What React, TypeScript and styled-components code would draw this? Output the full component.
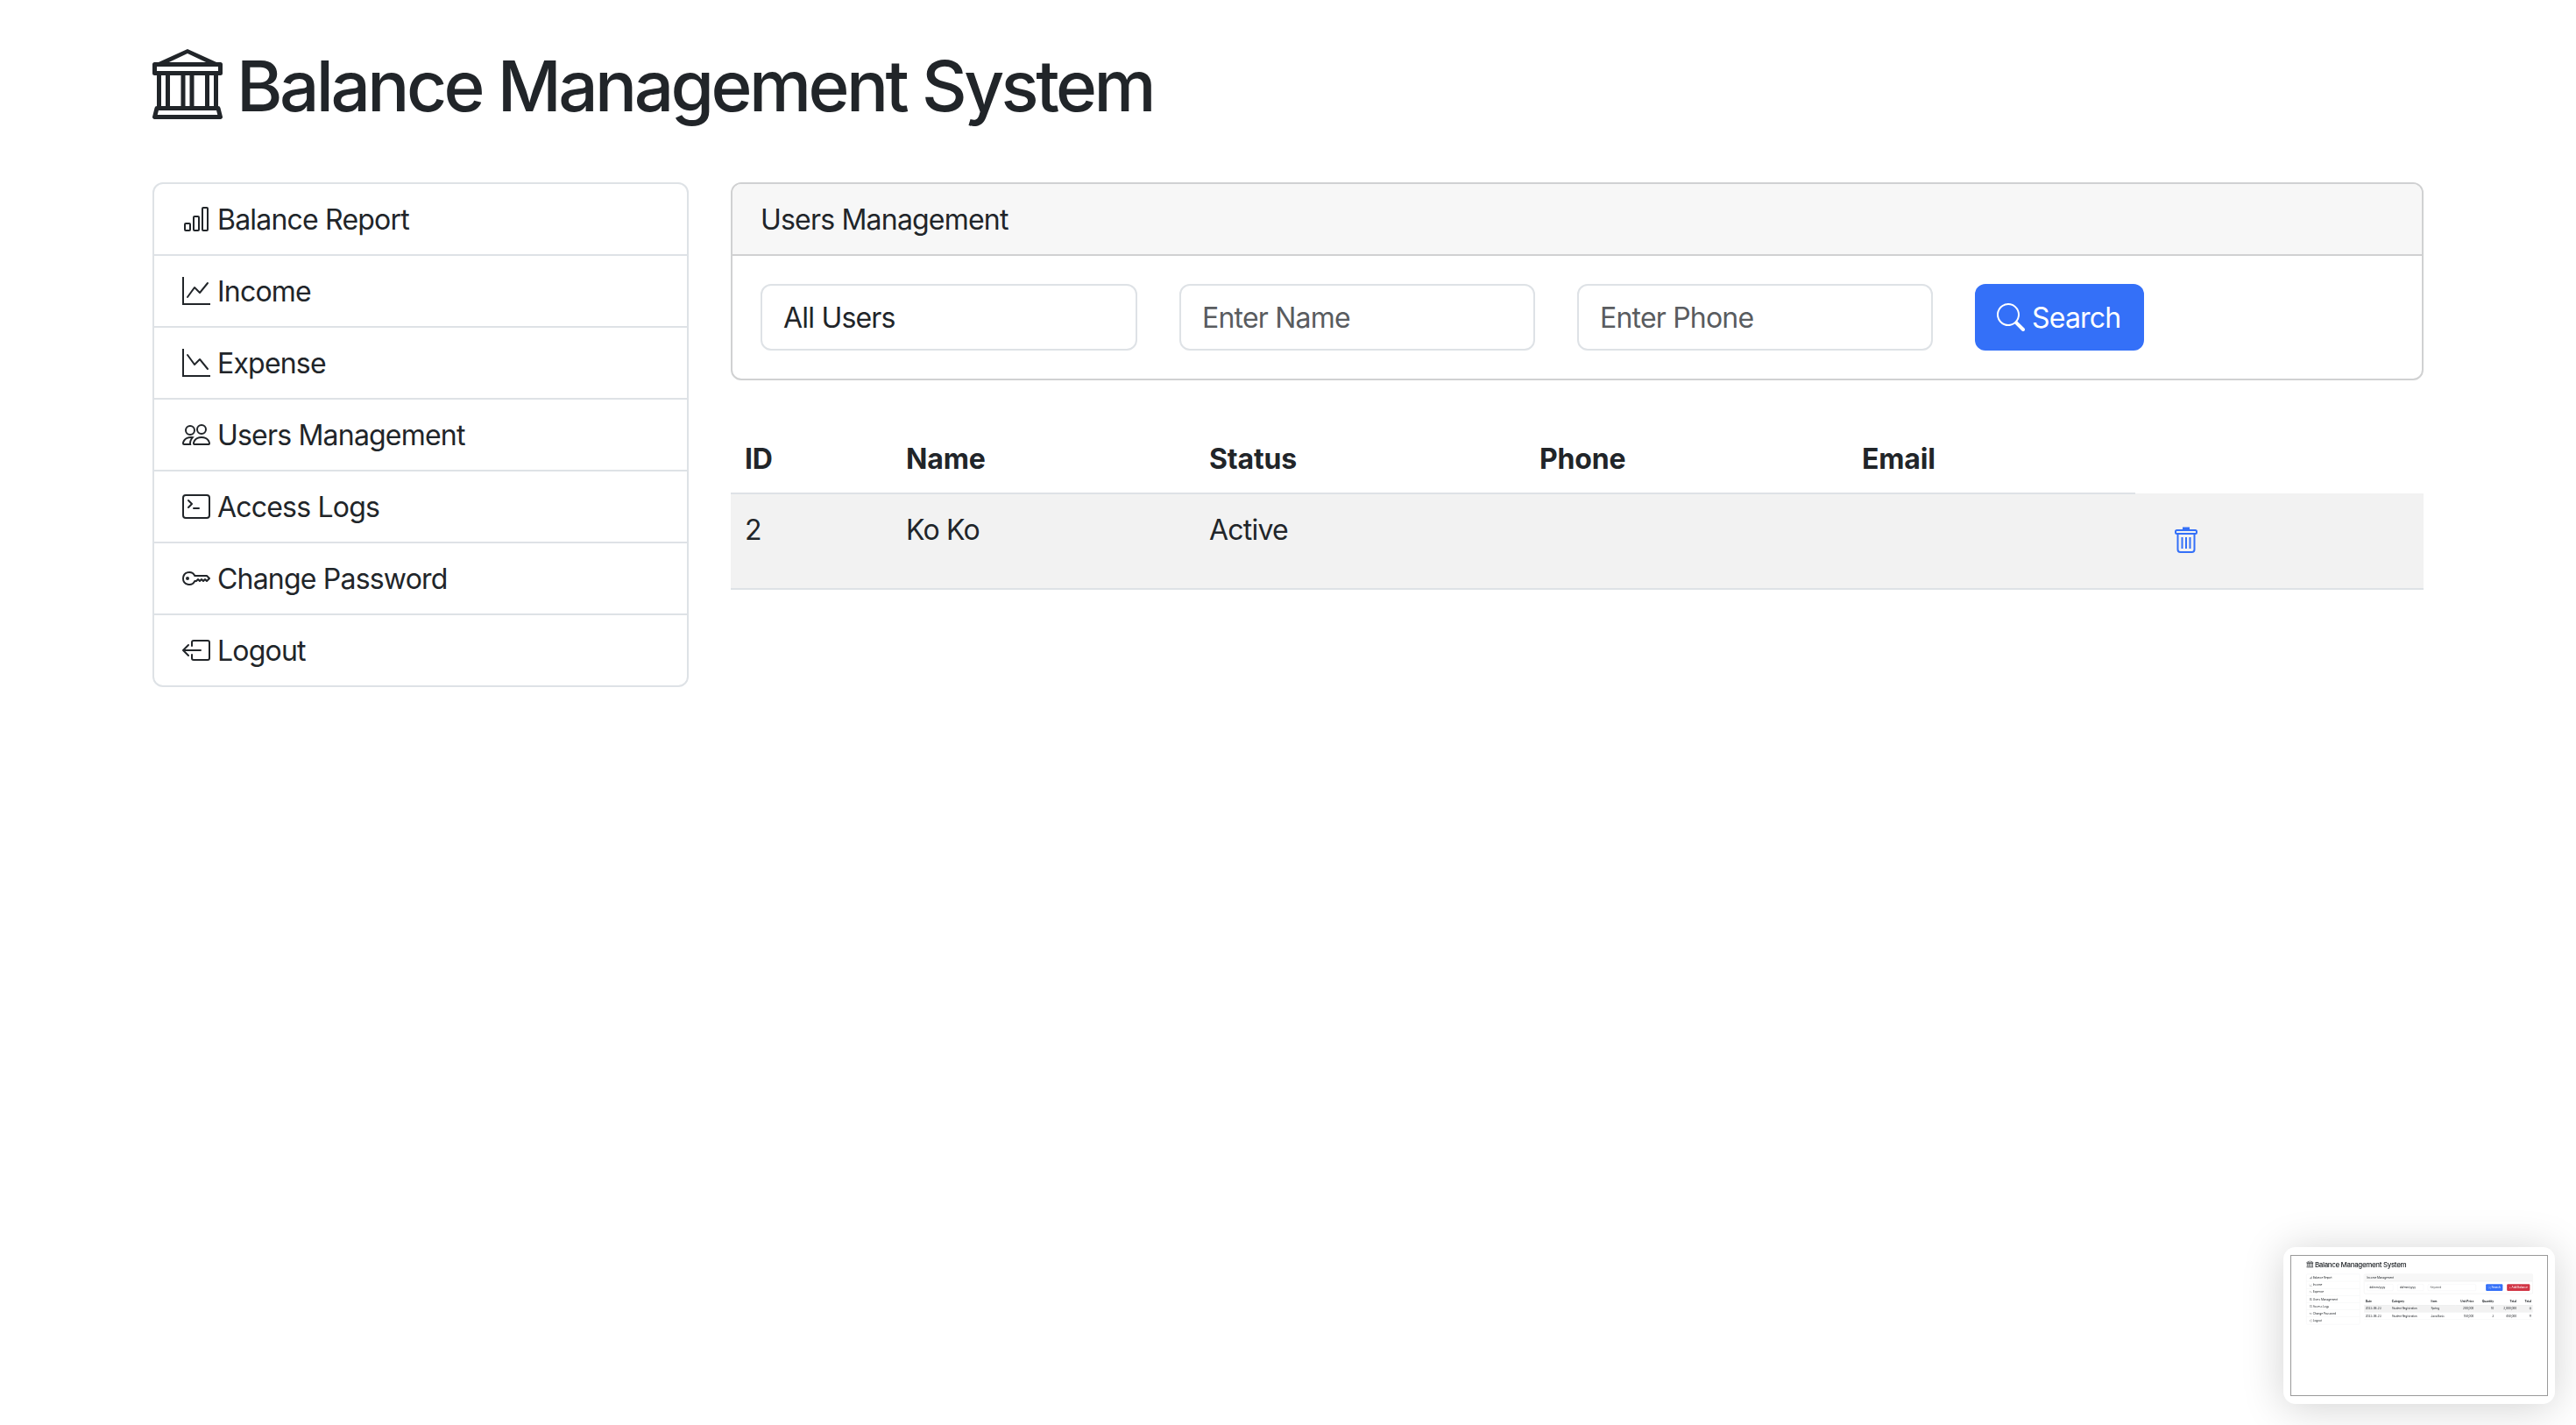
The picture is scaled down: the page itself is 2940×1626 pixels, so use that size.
import React from 'react';
import styled, { createGlobalStyle } from 'styled-components';
import {
	BsBank,
	BsBarChart,
	BsBoxArrowLeft,
	BsGraphDown,
	BsGraphUp,
	BsKey,
	BsPeople,
	BsSearch,
	BsTerminal,
} from 'react-icons/bs';

const TEXT = '#212529';
const BORDER = '#dee2e6';
const CARD_BORDER = '#d0d1d2';
const BLUE = '#3470f8';

const GlobalStyle = createGlobalStyle`
	html, body {
		margin: 0;
		background: #fff;
	}
	body {
		font-family: Inter, 'Liberation Sans', sans-serif;
		font-size: 32px;
		line-height: 48px;
		letter-spacing: -0.8px;
		color: ${TEXT};
	}
`;

const Screen = styled.div`
	position: relative;
	width: 2940px;
	height: 1626px;
	overflow: hidden;
	background: #fff;
`;

const Container = styled.div`
	box-sizing: border-box;
	width: 2640px;
	margin: 0 auto;
	padding: 0 24px;
`;

const Title = styled.h1`
	display: flex;
	align-items: center;
	gap: 16px;
	margin: 0;
	padding: 50px 0 62px;
	font-size: 80px;
	line-height: 96px;
	font-weight: 500;
	letter-spacing: -3.55px;
	& > svg {
		margin-top: -4px;
	}
`;

const Columns = styled.div`
	display: flex;
	align-items: flex-start;
	gap: 48px;
`;

const Menu = styled.ul`
	box-sizing: border-box;
	flex: 0 0 612px;
	margin: 0;
	padding: 0;
	list-style: none;
	border: 2px solid ${BORDER};
	border-radius: 12px;
`;

const MenuItem = styled.li`
	display: flex;
	align-items: center;
	gap: 8px;
	height: 80px;
	padding: 0 32px;
	font-size: 32px;
	& > span {
		padding-top: 2px;
	}
	& + & {
		border-top: 2px solid ${BORDER};
	}
`;

const Main = styled.div`
	flex: 1;
	min-width: 0;
`;

const Card = styled.section`
	box-sizing: border-box;
	border: 2px solid ${CARD_BORDER};
	border-radius: 12px;
	overflow: hidden;
`;

const CardHeader = styled.div`
	box-sizing: border-box;
	height: 82px;
	padding: 17px 32px 15px;
	background: #f7f7f7;
	border-bottom: 2px solid ${CARD_BORDER};
`;

const CardBody = styled.div`
	display: flex;
	align-items: center;
	gap: 48px;
	padding: 32px;
`;

const fieldStyles = `
	box-sizing: border-box;
	height: 76px;
	padding: 0 24px;
	font-family: Inter, 'Liberation Sans', sans-serif;
	font-size: 32px;
	letter-spacing: -0.8px;
	color: ${TEXT};
	background: #fff;
	border: 2px solid ${BORDER};
	border-radius: 12px;
	outline: none;
	&::placeholder {
		color: #595c5f;
		opacity: 1;
	}
`;

const Select = styled.select`
	${fieldStyles}
	width: 430px;
	appearance: none;
`;

const Input = styled.input<{ $width: number }>`
	${fieldStyles}
	width: ${(p) => p.$width}px;
`;

const Button = styled.button<{ $color: string }>`
	display: inline-flex;
	align-items: center;
	gap: 8px;
	box-sizing: border-box;
	height: 76px;
	padding: 0 27px 0 25px;
	font-family: Inter, 'Liberation Sans', sans-serif;
	font-size: 32px;
	letter-spacing: -0.8px;
	color: #fff;
	background: ${(p) => p.$color};
	border: 0;
	border-radius: 12px;
`;

const Spacer = styled.div`
	flex: 1;
`;

const Table = styled.table`
	width: 100%;
	margin-top: 48px;
	border-collapse: collapse;
	table-layout: fixed;
`;

const Th = styled.th<{ $right?: boolean; $plain?: boolean }>`
	padding: 18px 16px 14px;
	height: 81px;
	box-sizing: border-box;
	font-weight: 700;
	letter-spacing: -0.15px;
	text-align: ${(p) => (p.$right ? 'right' : 'left')};
	border-bottom: 2px solid ${(p) => (p.$plain ? 'transparent' : BORDER)};
`;

const Row = styled.tr<{ $striped?: boolean }>`
	background: ${(p) => (p.$striped ? '#f2f2f2' : '#fff')};
`;

const Td = styled.td<{ $right?: boolean }>`
	padding: 17px 16px 17px;
	vertical-align: top;
	text-align: ${(p) => (p.$right ? 'right' : 'left')};
	border-bottom: 2px solid ${BORDER};
`;

const IconCell = styled(Td)`
	padding: 0 16px 3px;
	height: 104px;
	vertical-align: middle;
`;

const TrashButton = styled.span`
	display: flex;
	padding-left: 29px;
	color: ${BLUE};
`;

const Preview = styled.div`
	position: absolute;
	left: 2606px;
	top: 1423px;
	box-sizing: border-box;
	width: 310px;
	height: 179px;
	padding: 9px 8px;
	background: #fff;
	border-radius: 14px;
	box-shadow: 0 4px 48px rgba(0, 0, 0, 0.18);
`;

const PreviewFrame = styled.div`
	position: relative;
	box-sizing: border-box;
	width: 294px;
	height: 161px;
	overflow: hidden;
	border: 1.5px solid #9a9a9a;
	filter: blur(0.6px);
`;

const PreviewPage = styled.div`
	width: 2940px;
	height: 1626px;
	transform: scale(0.0997);
	transform-origin: 0 0;
`;

const TrashIcon = ({ size }: { size: number }) => (
	<svg width={size} height={(size * 30) / 26} viewBox="0 0 26 30" fill="none" stroke="currentColor">
		<path d="M10 3V1.5h6V3" strokeWidth="2" fill="currentColor" />
		<rect x="1" y="4" width="24" height="4" rx="1.5" strokeWidth="2" />
		<path d="M3.5 8v18a3 3 0 0 0 3 3h13a3 3 0 0 0 3-3V8" strokeWidth="2" />
		<path d="M8.5 12v13M13 12v13M17.5 12v13" strokeWidth="2" />
	</svg>
);

const menu = [
	{ label: 'Balance Report', icon: BsBarChart },
	{ label: 'Income', icon: BsGraphUp },
	{ label: 'Expense', icon: BsGraphDown },
	{ label: 'Users Management', icon: BsPeople },
	{ label: 'Access Logs', icon: BsTerminal },
	{ label: 'Change Password', icon: BsKey },
	{ label: 'Logout', icon: BsBoxArrowLeft },
];

const Layout = ({ children }: { children: React.ReactNode }) => (
	<Container>
		<Title>
			<BsBank size={80} />
			<span>Balance Management System</span>
		</Title>
		<Columns>
			<Menu>
				{menu.map(({ label, icon: Icon }) => (
					<MenuItem key={label}>
						<Icon size={32} />
						<span>{label}</span>
					</MenuItem>
				))}
			</Menu>
			<Main>{children}</Main>
		</Columns>
	</Container>
);

const incomeRows = [
	['2023-06-23', 'Student Registration', 'Spring', '200,000', '10', '2,000,000'],
	['2023-06-23', 'Student Registration', 'Java Basic', '150,000', '3', '450,000'],
];

// the floating screenshot thumbnail, same page at a tenth of the size
const IncomePage = () => (
	<Layout>
		<Card>
			<CardHeader>Income Management</CardHeader>
			<CardBody>
				<Input $width={300} defaultValue="dd/mm/yyyy" />
				<Input $width={300} defaultValue="dd/mm/yyyy" />
				<Input $width={550} placeholder="Keyword" />
				<Spacer />
				<Button $color={BLUE}>
					<BsSearch size={32} />
					Search
				</Button>
				<Button $color="#d13545">+ Add Balance</Button>
			</CardBody>
		</Card>
		<Table>
			<colgroup>
				<col width={300} />
				<col width={450} />
				<col width={300} />
				<col width={220} />
				<col width={230} />
				<col width={260} />
				<col width={170} />
			</colgroup>
			<thead>
				<tr>
					<Th>Date</Th>
					<Th>Category</Th>
					<Th>Item</Th>
					<Th $right>Unit Price</Th>
					<Th $right>Quantity</Th>
					<Th $right>Total</Th>
					<Th $right>Total</Th>
				</tr>
			</thead>
			<tbody>
				{incomeRows.map((row, i) => (
					<Row key={row[2]} $striped={i === 0}>
						<Td>{row[0]}</Td>
						<Td>{row[1]}</Td>
						<Td>{row[2]}</Td>
						<Td $right>{row[3]}</Td>
						<Td $right>{row[4]}</Td>
						<Td $right>{row[5]}</Td>
						<Td $right>
							<TrashIcon size={26} />
						</Td>
					</Row>
				))}
			</tbody>
		</Table>
	</Layout>
);

const App = () => {
	return (
		<Screen>
			<GlobalStyle />
			<Layout>
				<Card>
					<CardHeader>Users Management</CardHeader>
					<CardBody>
						<Select defaultValue="all">
							<option value="all">All Users</option>
						</Select>
						<Input $width={406} placeholder="Enter Name" />
						<Input $width={406} placeholder="Enter Phone" />
						<Button $color={BLUE}>
							<BsSearch size={32} />
							Search
						</Button>
					</CardBody>
				</Card>
				<Table>
					<colgroup>
						<col width={184} />
						<col width={346} />
						<col width={377} />
						<col width={368} />
						<col width={328} />
						<col width={329} />
					</colgroup>
					<thead>
						<tr>
							<Th>ID</Th>
							<Th>Name</Th>
							<Th>Status</Th>
							<Th>Phone</Th>
							<Th>Email</Th>
							<Th $plain />
						</tr>
					</thead>
					<tbody>
						<Row $striped>
							<Td>2</Td>
							<Td>Ko Ko</Td>
							<Td>Active</Td>
							<Td />
							<Td />
							<IconCell>
								<TrashButton>
									<TrashIcon size={26} />
								</TrashButton>
							</IconCell>
						</Row>
					</tbody>
				</Table>
			</Layout>
			<Preview>
				<PreviewFrame>
					<PreviewPage>
						<IncomePage />
					</PreviewPage>
				</PreviewFrame>
			</Preview>
		</Screen>
	);
};

export default App;
